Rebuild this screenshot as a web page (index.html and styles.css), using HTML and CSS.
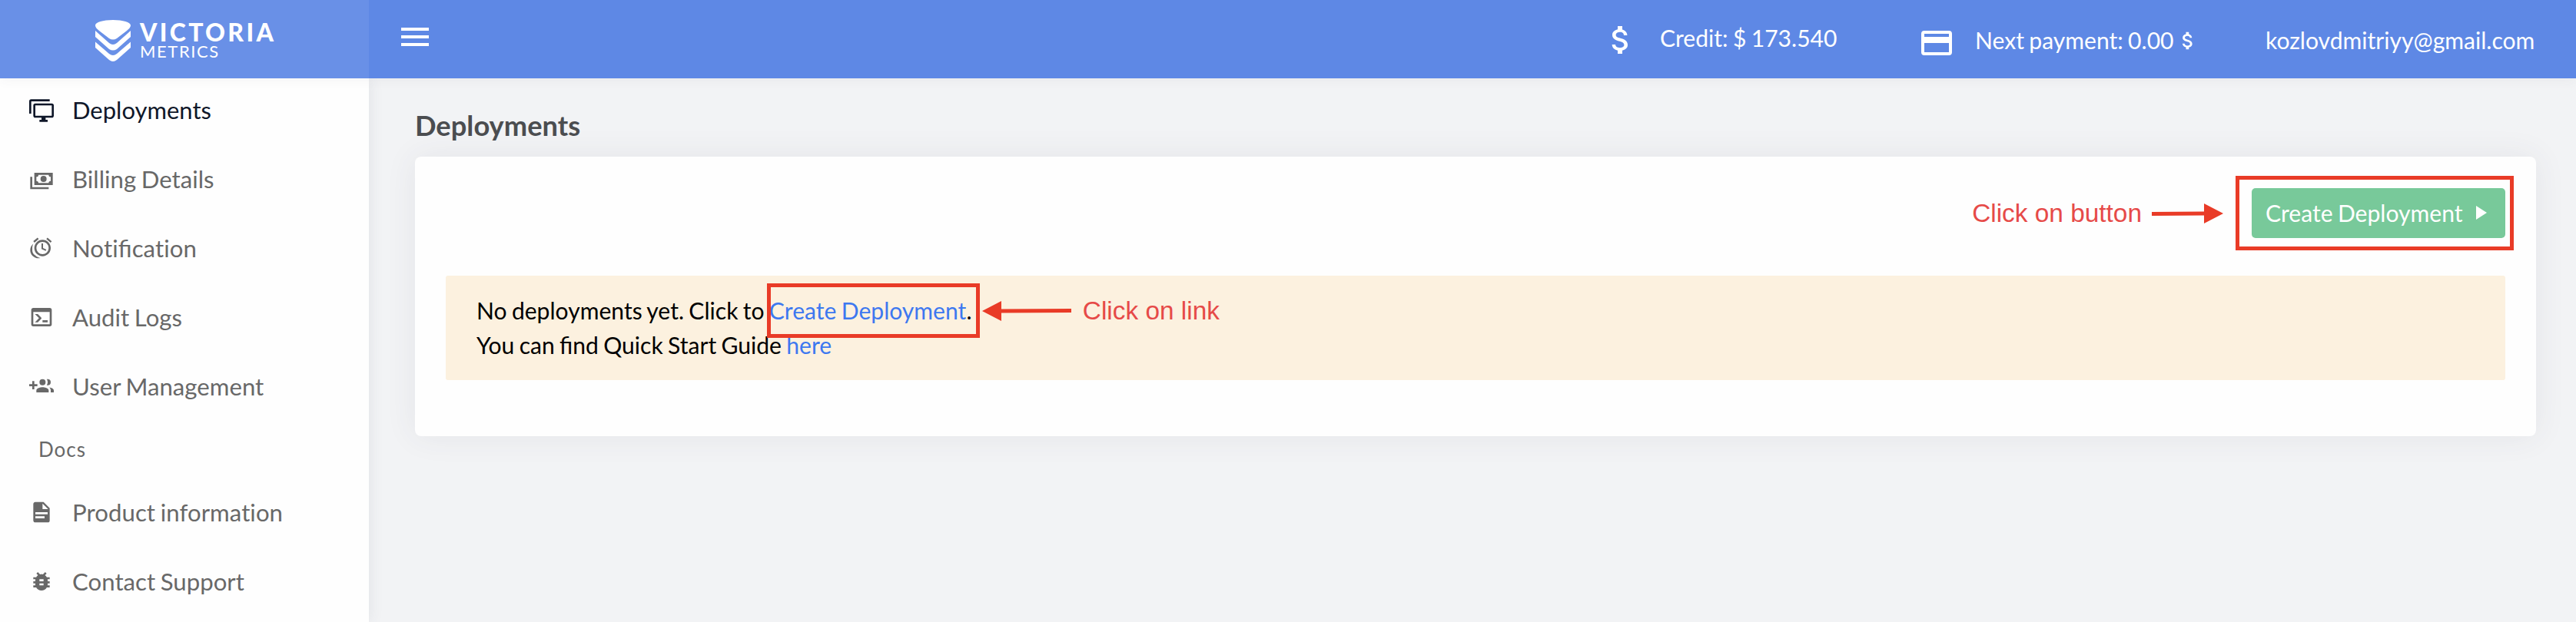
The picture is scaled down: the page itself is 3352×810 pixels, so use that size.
FILE: index.html
```html
<!DOCTYPE html>
<html lang="en">
<head>
<meta charset="utf-8">
<title>Deployments</title>
<link rel="stylesheet" href="styles.css">
</head>
<body>
<header class="topbar">
  <div class="brand">
    <svg class="brand-mark" viewBox="0 0 46 54"><path d="M0 7C0 3 10 0 23 0S46 3 46 7C46 10 43 12 41 14L28 24Q23 27 18 24L5 14C3 12 0 10 0 7Z"/><path d="M0 14L18 30Q23 34 28 30L46 14V22L28 38Q23 41 18 38L0 22Z"/><path d="M0 28.500L18 44Q23 48 28 44L46 28.500V36L28 52Q23 56 18 52L0 36Z"/></svg>
    <div class="brand-text"><span class="brand-top">VICTORIA</span><span class="brand-sub">METRICS</span></div>
  </div>
  <div class="bar">
    <button class="burger" aria-label="Menu"><i></i><i></i><i></i></button>
    <div class="stats">
      <svg class="dollar" viewBox="0 0 24 24"><path d="M11.8 10.9c-2.27-.59-3-1.2-3-2.15 0-1.09 1.01-1.85 2.7-1.85 1.78 0 2.44.85 2.5 2.1h2.21c-.07-1.72-1.12-3.3-3.21-3.81V3h-3v2.16c-1.94.42-3.5 1.68-3.5 3.61 0 2.31 1.91 3.46 4.7 4.13 2.5.6 3 1.48 3 2.41 0 .69-.49 1.79-2.7 1.79-2.06 0-2.87-.92-2.98-2.1h-2.2c.12 2.19 1.76 3.42 3.68 3.83V21h3v-2.15c1.95-.37 3.5-1.5 3.5-3.55 0-2.84-2.43-3.81-4.7-4.4z"/></svg>
      <span class="credit">Credit: $ 173.540</span>
      <svg class="card-icon" viewBox="0 0 40 32"><path fill-rule="evenodd" d="M4 0H36A4 4 0 0 1 40 4V28A4 4 0 0 1 36 32H4A4 4 0 0 1 0 28V4A4 4 0 0 1 4 0ZM4 4V8H36V4ZM4 16V28H36V16Z"/></svg>
      <span class="payment">Next payment: 0.00</span>
      <svg class="dollar-small" viewBox="0 0 24 24"><path d="M11.8 10.9c-2.27-.59-3-1.2-3-2.15 0-1.09 1.01-1.85 2.7-1.85 1.78 0 2.44.85 2.5 2.1h2.21c-.07-1.72-1.12-3.3-3.21-3.81V3h-3v2.16c-1.94.42-3.5 1.68-3.5 3.61 0 2.31 1.91 3.46 4.7 4.13 2.5.6 3 1.48 3 2.41 0 .69-.49 1.79-2.7 1.79-2.06 0-2.87-.92-2.98-2.1h-2.2c.12 2.19 1.76 3.42 3.68 3.83V21h3v-2.15c1.95-.37 3.5-1.5 3.5-3.55 0-2.84-2.43-3.81-4.7-4.4z"/></svg>
      <span class="email">kozlovdmitriyy@gmail.com</span>
    </div>
  </div>
</header>
<div class="shell">
  <nav class="sidebar">
    <a class="item active"><svg viewBox="0 0 24 24"><path d="M22,17V7H6V17H22M22,5A2,2 0 0,1 24,7V17C24,18.11 23.1,19 22,19H16V21H18V23H10V21H12V19H6C4.89,19 4,18.11 4,17V7A2,2 0 0,1 6,5H22M2,3V15H0V3A2,2 0 0,1 2,1H20V3H2Z"/></svg><span>Deployments</span></a>
    <a class="item"><svg viewBox="0 0 24 24"><path d="M5,6H23V18H5V6M14,9A3,3 0 0,1 17,12A3,3 0 0,1 14,15A3,3 0 0,1 11,12A3,3 0 0,1 14,9M9,8A2,2 0 0,1 7,10V14A2,2 0 0,1 9,16H19A2,2 0 0,1 21,14V10A2,2 0 0,1 19,8H9M1,10H3V20H19V22H1V10Z"/></svg><span>Billing Details</span></a>
    <a class="item"><svg viewBox="0 0 24 24"><path d="M9.29,3.25L5.16,6.72L4,5.34L8.14,1.87L9.29,3.25M22,5.35L20.84,6.73L16.7,3.25L17.86,1.87L22,5.35M13,4A8,8 0 0,1 21,12A8,8 0 0,1 13,20A8,8 0 0,1 5,12A8,8 0 0,1 13,4M13,6A6,6 0 0,0 7,12A6,6 0 0,0 13,18A6,6 0 0,0 19,12A6,6 0 0,0 13,6M12,7.5H13.5V12.03L16.72,13.5L16.1,14.86L12,13V7.5M1,14C1,11.5 2.13,9.3 3.91,7.83C3.33,9.1 3,10.5 3,12L3.06,13.13L3,14C3,16.28 4.27,18.26 6.14,19.28C7.44,20.5 9.07,21.39 10.89,21.78C10.28,21.92 9.65,22 9,22A8,8 0 0,1 1,14Z"/></svg><span>No<span class="plain">ti</span>fica<span class="plain">tion</span></span></a>
    <a class="item"><svg viewBox="0 0 24 24"><path d="M20,19V7H4V19H20M20,3A2,2 0 0,1 22,5V19A2,2 0 0,1 20,21H4A2,2 0 0,1 2,19V5C2,3.89 2.9,3 4,3H20M13,17V15H18V17H13M9.58,13L5.57,9H8.4L11.7,12.3C12.09,12.69 12.09,13.33 11.7,13.72L8.42,17H5.59L9.58,13Z"/></svg><span>Audit Logs</span></a>
    <a class="item"><svg viewBox="0 0 24 24"><path d="M13,13C11,13 7,14 7,16V18H19V16C19,14 15,13 13,13M19.62,13.16C20.45,13.88 21,14.82 21,16V18H24V16C24,14.46 21.63,13.5 19.62,13.16M13,11A3,3 0 0,0 16,8A3,3 0 0,0 13,5A3,3 0 0,0 10,8A3,3 0 0,0 13,11M18,11A3,3 0 0,0 21,8A3,3 0 0,0 18,5C17.68,5 17.37,5.05 17.08,5.14C17.65,5.95 18,6.94 18,8C18,9.06 17.65,10.04 17.08,10.85C17.37,10.95 17.68,11 18,11M8,10H5V7H3V10H0V12H3V15H5V12H8V10Z"/></svg><span>User Management</span></a>
    <div class="group">Docs</div>
    <a class="item"><svg viewBox="0 0 24 24"><path d="M13,9H18.5L13,3.5V9M6,2H14L20,8V20A2,2 0 0,1 18,22H6C4.89,22 4,21.1 4,20V4C4,2.89 4.89,2 6,2M15,18V16H6V18H15M18,14V12H6V14H18Z"/></svg><span class="plain">Product information</span></a>
    <a class="item"><svg viewBox="0 0 24 24"><path d="M20,8H17.19C16.74,7.2 16.12,6.5 15.37,6L17,4.41L15.59,3L13.42,5.17C12.96,5.06 12.5,5 12,5C11.5,5 11.05,5.06 10.59,5.17L8.41,3L7,4.41L8.62,6C7.87,6.5 7.26,7.21 6.81,8H4V10H6.09C6.03,10.33 6,10.66 6,11V12H4V14H6V15C6,15.34 6.03,15.67 6.09,16H4V18H6.81C8.47,20.87 12.14,21.84 15,20.18C15.91,19.66 16.67,18.9 17.19,18H20V16H17.91C17.97,15.67 18,15.34 18,15V14H20V12H18V11C18,10.66 17.97,10.33 17.91,10H20V8M14,16H10V14H14V16M14,12H10V10H14V12Z"/></svg><span>Contact Support</span></a>
  </nav>
  <main class="content">
    <h1>Deployments</h1>
    <section class="panel">
      <div class="actions">
        <div class="target">
          <button class="create">Create Deployment<svg viewBox="0 0 14 18"><path d="M0 0L14 9L0 18Z"/></svg></button>
          <div class="frame frame-button"></div>
          <div class="note note-button"><span>Click on button</span><svg viewBox="0 0 93 26"><path d="M0 11L68 10.500V0L93 13L68 26V15.500L0 16Z"/></svg></div>
        </div>
      </div>
      <div class="alert">
        <div>No deployments yet. Click to <span class="target"><a>Create Deployment</a>.<span class="frame frame-link"></span><span class="note note-link"><svg viewBox="0 0 116 26"><path d="M116 10L25 10.500V0L0 13L25 26V15.500L116 15Z"/></svg><span>Click on link</span></span></span></div>
        <div>You can find Quick Start Guide <a>here</a></div>
      </div>
    </section>
  </main>
</div>
</body>
</html>
```
FILE: styles.css
```css
* { box-sizing: border-box; }
body {
  margin: 0;
  height: 810px;
  overflow: hidden;
  display: flex;
  flex-direction: column;
  background: #f2f3f5;
  font-family: Lato, sans-serif;
  font-size: 30.1px;
  word-spacing: -1.4px;
  color: #000;
}
button { border: 0; background: none; padding: 0; font: inherit; word-spacing: inherit; }
svg { display: block; flex: none; fill: currentColor; }

.topbar {
  display: flex;
  height: 102px;
  flex: none;
  color: #fff;
  background: #5e88e5;
  position: relative;
  z-index: 2;
  box-shadow: 0 2px 14px rgba(60, 70, 90, .06);
}
.brand {
  width: 480px;
  display: flex;
  gap: 12px;
  padding: 26px 0 0 124px;
  background: #6990e7;
}
.brand-mark { width: 46px; height: 54px; }
.brand-text { display: flex; flex-direction: column; }
.brand-top { font-size: 32px; font-weight: 900; line-height: 31px; letter-spacing: 3.3px; }
.brand-sub { font-size: 22px; line-height: 22px; letter-spacing: 1.6px; margin-top: -1px; }
.bar { flex: 1; display: flex; justify-content: space-between; padding: 0 53px 0 42px; }
.burger { width: 36px; display: flex; flex-direction: column; gap: 6px; padding-top: 36px; }
.burger i { height: 4px; width: 36px; background: #fff; }
.stats { display: flex; align-items: flex-start; line-height: 36px; white-space: nowrap; }
.dollar { width: 48px; height: 48px; margin: 28px 27px 0 0; }
.credit { width: 340px; margin-top: 31px; }
.card-icon { width: 40px; height: 32px; margin: 40px 30px 0 0; }
.payment { width: 262px; margin-top: 34px; }
.dollar-small { width: 30px; height: 30px; margin: 38px 86px 0 0; }
.email { width: 351px; margin-top: 34px; }

.shell { flex: 1; display: flex; min-height: 0; }
.sidebar {
  width: 480px;
  flex: none;
  background: #fefefe;
  color: #686868;
  box-shadow: 0 0 18px rgba(60, 70, 90, .1);
  font-size: 31.2px;
}
.item { display: flex; align-items: center; gap: 24px; height: 90px; padding-left: 38px; }
.item svg { width: 32px; height: 32px; }
.item:first-child { height: 86px; padding-bottom: 2px; }
.item > span { margin-top: -1px; }
.item.active > span { margin-top: -2px; font-size: 31px; }
.active { color: #0f1729; }
/* keeps "ti" as two separate letters */
.plain { letter-spacing: .05px; }
.group { height: 74px; line-height: 74px; padding-left: 50px; font-size: 26px; letter-spacing: 1px; }

.content { flex: 1; padding: 38px 52px 0 60px; }
h1 { margin: 0; height: 64px; font-size: 36.3px; line-height: 46px; font-weight: 700; color: #4b4d50; }
.panel {
  height: 364px;
  padding: 41px 40px 0;
  border-radius: 8px;
  background: #fefefe;
  box-shadow: 0 0 40px rgba(60, 70, 90, .08);
}
.actions { display: flex; justify-content: flex-end; height: 114px; }
.target { position: relative; }
.create {
  display: flex;
  align-items: center;
  gap: 17px;
  width: 330px;
  height: 65px;
  padding: 0 0 1px 18px;
  border-radius: 5px;
  background: #78c99a;
  color: #fff;
  white-space: nowrap;
}
.create svg { width: 14px; height: 18px; }
.alert {
  height: 136px;
  padding: 23px 40px;
  line-height: 45px;
  background: #fcf1df;
  border-radius: 3px;
}
.alert a { color: #3d78f0; }
.frame { position: absolute; border: 5px solid #e93b27; }
.frame-button { left: -21px; top: -16px; width: 362px; height: 97px; }
.frame-link { left: -3px; top: -17px; width: 277px; height: 71px; }
.note {
  position: absolute;
  display: flex;
  align-items: center;
  font-family: "Liberation Sans", sans-serif;
  font-size: 33.4px;
  word-spacing: 0;
  line-height: 40px;
  color: #e64a48;
  white-space: nowrap;
}
.note svg { color: #e93b27; height: 26px; }
.note-button { right: 367px; top: 13px; gap: 13px; }
.note-button svg { width: 93px; }
.note-link { left: 277px; top: -1px; gap: 15px; }
.note-link svg { width: 116px; }
```
